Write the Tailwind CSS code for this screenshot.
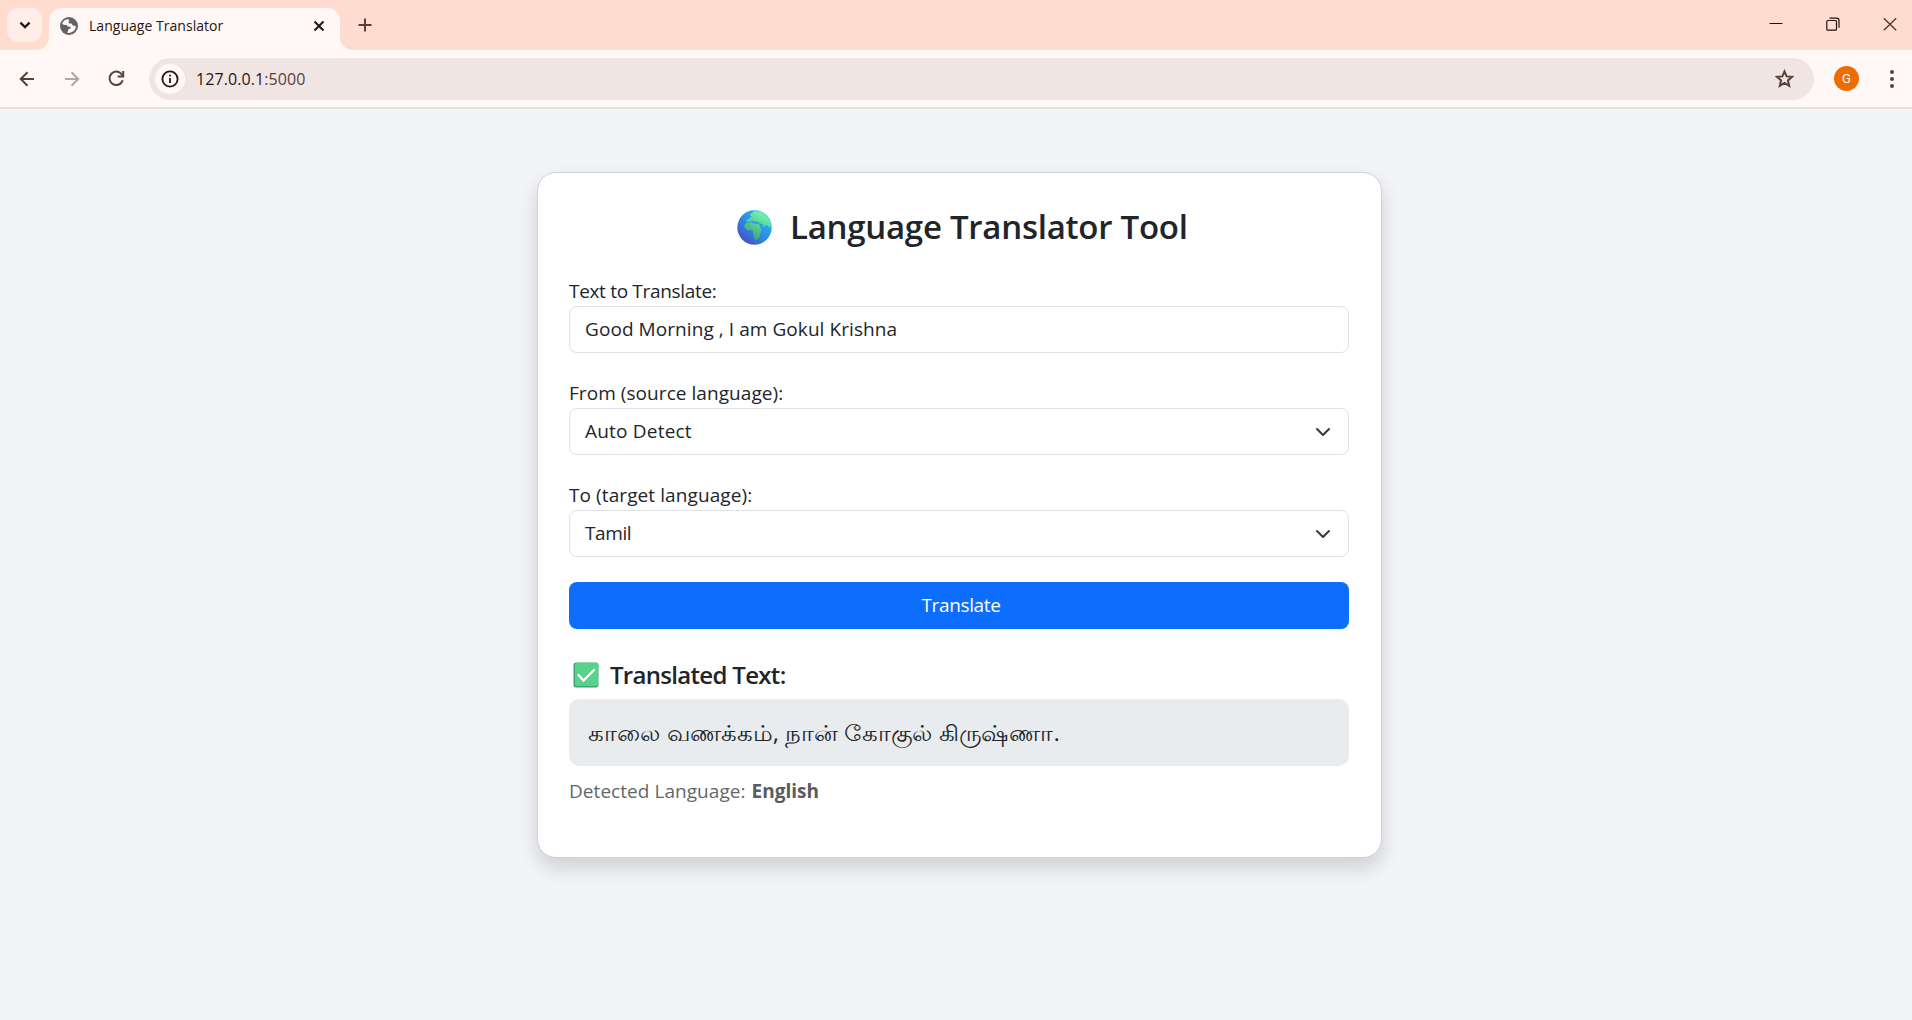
<!DOCTYPE html>
<html lang="en">
<head>
<meta charset="utf-8">
<title>Language Translator</title>
<script src="https://cdn.jsdelivr.net/npm/@tailwindcss/browser@4"></script>
</head>
<body class="h-[1020px] w-[1912px] overflow-hidden bg-[#f2f4f8] font-['Open_Sans','Noto_Sans',sans-serif] text-[#212529]">
<!-- Tab strip -->
<header class="flex h-[50px] items-start bg-[#ffdbd0]">
  <button class="ml-[7px] mt-2 flex h-[34px] w-[35px] items-center justify-center rounded-[11px] bg-[#ffede7]">
    <svg class="h-3 w-3" viewBox="0 0 12 12" fill="none" stroke="#271512" stroke-width="2.2"><path d="M1.4 3.6 6 8.1l4.6-4.5"/></svg>
  </button>
  <div class="relative ml-[7px] flex h-[42px] w-[291px] items-center self-end rounded-t-[13px] bg-[#fff8f6] pb-[7px] pl-[11px] pr-[15px]">
    <svg class="absolute -left-[13px] bottom-0 h-[13px] w-[13px]" viewBox="0 0 13 13"><path d="M13 0v13H0A13 13 0 0 0 13 0z" fill="#fff8f6"/></svg>
    <svg class="absolute -right-[13px] bottom-0 h-[13px] w-[13px]" viewBox="0 0 13 13"><path d="M0 0v13h13A13 13 0 0 1 0 0z" fill="#fff8f6"/></svg>
    <svg class="h-[18px] w-[18px]" viewBox="0 0 18 18"><circle cx="9" cy="9" r="9" fill="#5f6368"/><path d="M8.3 1.9c-3 .3-5.4 2.3-6.2 5 1.500.5 2.600 1.100 4 1.100 1.300.1 1.200 1.600 2.400 1.700 1.100.1 2.100-.2 2.400.8.2.9-1.300 1.100-2 1.500-1.200.7-.8 2.500-1.600 3.800 4.500.8 8.400-2.300 8.600-6.500-.8-.7-2.100-.4-3-.8-1-.5-.6-1.600-1.600-1.900-1-.4-2.300 0-2.700-.9-.4-1 .9-1.300.7-2.100-.2-.7-1-.8-1-1.700z" fill="#fff8f6"/></svg>
    <span class="ml-[11px] whitespace-nowrap text-[14px] leading-5 tracking-[0.03px] text-[#271512]">Language Translator</span>
    <svg class="ml-auto h-3 w-3" viewBox="0 0 12 12" stroke="#271512" stroke-width="2"><path d="M1.500 1.500l9 9m0-9-9 9"/></svg>
  </div>
  <svg class="ml-[18px] mt-[18px] h-[14px] w-[14px]" viewBox="0 0 14 14" stroke="#5b403a" stroke-width="2"><path d="M7 .5v13M.5 7h13"/></svg>
  <div class="ml-auto mr-[15px] mt-[17px] flex items-center gap-[43px]">
    <svg class="h-[14px] w-[14px]" viewBox="0 0 14 14"><path d="M.5 6.500h13" stroke="#271512"/></svg>
    <svg class="h-[14px] w-[14px]" viewBox="0 0 14 14" fill="none" stroke="#271512" stroke-width="1.200"><rect x=".8" y="3.500" width="9.700" height="9.700" rx="1"/><path d="M3.500 1.200h7.200a2.300 2.300 0 0 1 2.300 2.300v7.200"/></svg>
    <svg class="h-[14px] w-[14px]" viewBox="0 0 14 14" stroke="#4a322d" stroke-width="1.200"><path d="m.8 1.300 12.400 12M13.200 1.300.8 13.300"/></svg>
  </div>
</header>
<!-- Toolbar -->
<nav class="flex h-[59px] items-center border-b-2 border-[#ecdfde] bg-[#fff8f6] pl-[19px] pr-[18px]">
  <svg class="h-4 w-4" viewBox="0 0 16 16" fill="none" stroke="#5b403a" stroke-width="2"><path d="M15 8H2M8.500 1.200 1.700 8l6.800 6.800"/></svg>
  <svg class="ml-[29px] h-4 w-4" viewBox="0 0 16 16" fill="none" stroke="#b3a5a2" stroke-width="2"><path d="M1 8h13M7.500 1.200 14.300 8l-6.800 6.800"/></svg>
  <svg class="ml-[28px] h-[17px] w-[17px]" viewBox="0 0 17 17" fill="none" stroke="#5b403a" stroke-width="2"><path d="M14.700 10.200A6.700 6.700 0 1 1 13.800 4.500L15 6"/><path d="M15.200 1v5.500H9.700"/></svg>
  <div class="ml-6 flex h-[42px] w-[1665px] items-center rounded-full bg-[#f1e5e4] pl-[6px] pr-[20px]">
    <div class="flex h-[30px] w-[30px] items-center justify-center rounded-full bg-[#fff8f6]">
      <svg class="h-[18px] w-[18px]" viewBox="0 0 18 18" fill="none" stroke="#271512"><circle cx="9" cy="9" r="7.600" stroke-width="1.800"/><path d="M9 8v5M9 4.700v1.800" stroke-width="1.800"/></svg>
    </div>
    <span class="ml-[11px] whitespace-nowrap pt-px text-[16px] leading-6 tracking-[0.08px] text-[#271512]">127.0.0.1<span class="text-[#5b403a]">:5000</span></span>
    <svg class="ml-auto h-[19px] w-[19px]" viewBox="0 0 19 19" fill="none" stroke="#5b403a" stroke-width="2"><path d="m9.500 2.400 2.100 5 5.500.4-4.200 3.600 1.300 5.400-4.700-2.900-4.700 2.900 1.300-5.400L1.900 7.800l5.500-.4z"/></svg>
  </div>
  <div class="ml-5 flex h-[25px] w-[25px] items-center justify-center rounded-full bg-[#ef6c00] font-[Roboto] text-[13px] text-white">G</div>
  <svg class="ml-auto h-[18px] w-1" viewBox="0 0 4 18" fill="#5b403a"><circle cx="2" cy="2" r="2"/><circle cx="2" cy="9" r="2"/><circle cx="2" cy="16" r="2"/></svg>
</nav>
<!-- Translator card -->
<main class="flex justify-center pl-[7px] pt-[63px]">
  <section class="flex h-[686px] w-[845px] flex-col rounded-[19px] border border-[#cfd1d4] bg-white pl-[31px] pr-8 pt-[30px] shadow-[0_10px_20px_rgba(0,0,0,0.15)]">
    <h1 class="flex h-[48px] items-center pl-[168px] text-[33px] leading-[48px] font-semibold">
      <svg class="h-[35px] w-[35px] shrink-0" viewBox="0 0 35 35">
        <defs><linearGradient id="sea" x1=".8" y1=".2" x2=".2" y2=".9"><stop stop-color="#20b2fa"/><stop offset=".5" stop-color="#2f8ae5"/><stop offset="1" stop-color="#4552c4"/></linearGradient>
        <linearGradient id="land" x1=".8" y1="0" x2=".3" y2="1"><stop stop-color="#72ffb0"/><stop offset="1" stop-color="#3f9e78"/></linearGradient></defs>
        <circle cx="17.500" cy="17.500" r="17.200" fill="url(#sea)"/>
        <path fill="url(#land)" d="M12.500 4.500 17 1.200c6-.8 12.500 3 15.500 8.500l1.600 6.300-1.300 2-2-2.500-1.800-.2-2.500 2-1.100-3.300-3.200-.4.500-1.200-2-.1-1.500-1.200-1.800 1-1.900-1.600-2 1.200-3.500.3-.8-2 2.700-.7.800-1.500 2.300-1.200-1.500-1zM9 13l5.500-.8 2.500 1.300 4.800.3 2.200 5 .8 1.300-1.500 3.200-1 4-2.500 3.200-2.100-.5-1.200-5-.5-3.800-1.800-1.200-4.200.2-2.800-3 .5-2.500z"/>
      </svg>
      <span class="ml-[18px] whitespace-nowrap tracking-[-0.26px]">Language Translator Tool</span>
    </h1>
    <form class="mt-[25px] flex flex-col text-[19px] leading-[30px]">
      <label class="whitespace-nowrap tracking-[-0.32px]">Text to Translate:</label>
      <div class="flex h-[47px] items-center rounded-[8px] border border-[#dee2e6] pb-px pl-[15px] tracking-[0.07px]">Good Morning , I am Gokul Krishna</div>
      <label class="mt-[25px] whitespace-nowrap tracking-[0.06px]">From (source language):</label>
      <div class="flex h-[47px] items-center justify-between rounded-[8px] border border-[#dee2e6] pl-[15px] pr-[18px]"><span class="pb-px tracking-[0.2px]">Auto Detect</span>
        <svg class="h-[14px] w-[14px]" viewBox="0 0 14 14" fill="none" stroke="#343a40" stroke-width="2" stroke-linecap="round" stroke-linejoin="round"><path d="m1 4 6 6 6-6"/></svg></div>
      <label class="mt-[25px] whitespace-nowrap tracking-[0.09px]">To (target language):</label>
      <div class="flex h-[47px] items-center justify-between rounded-[8px] border border-[#dee2e6] pl-[15px] pr-[18px]"><span class="pb-px tracking-[-0.4px]">Tamil</span>
        <svg class="h-[14px] w-[14px]" viewBox="0 0 14 14" fill="none" stroke="#343a40" stroke-width="2" stroke-linecap="round" stroke-linejoin="round"><path d="m1 4 6 6 6-6"/></svg></div>
      <button type="button" class="mt-[25px] flex h-[47px] items-center justify-center rounded-[8px] bg-[#0d6efd] pb-px pl-1 tracking-[-0.35px] text-white">Translate</button>
    </form>
    <h2 class="mt-[31px] flex h-[30px] items-center pl-1 text-[24px] leading-[30px] font-semibold">
      <svg class="h-[26px] w-[26px]" viewBox="0 0 26 26"><rect x=".5" y=".5" width="25" height="25" rx="2.500" fill="#3fa673"/><rect x="2" y="1" width="23" height="23" rx="1.500" fill="#55d38b"/><path d="m5.500 13 5 5.500L21 8" fill="none" stroke="#fff" stroke-width="2.300" stroke-linecap="round"/></svg>
      <span class="ml-[11px] whitespace-nowrap pb-px tracking-[-0.69px]">Translated Text:</span>
    </h2>
    <div class="mt-[9px] flex h-[67px] items-center rounded-[10px] bg-[#e9ecef] pl-[19px] text-[22px]"><span class="origin-left scale-x-[1.115] whitespace-nowrap">காலை வணக்கம், நான் கோகுல் கிருஷ்ணா.</span></div>
    <p class="mt-[10px] flex h-[30px] gap-[6px] text-[19px] leading-[30px] text-[#63676b]"><span class="whitespace-nowrap tracking-[0.05px]">Detected Language:</span><strong class="whitespace-nowrap font-bold text-[#595c5f]">English</strong></p>
  </section>
</main>
</body>
</html>
